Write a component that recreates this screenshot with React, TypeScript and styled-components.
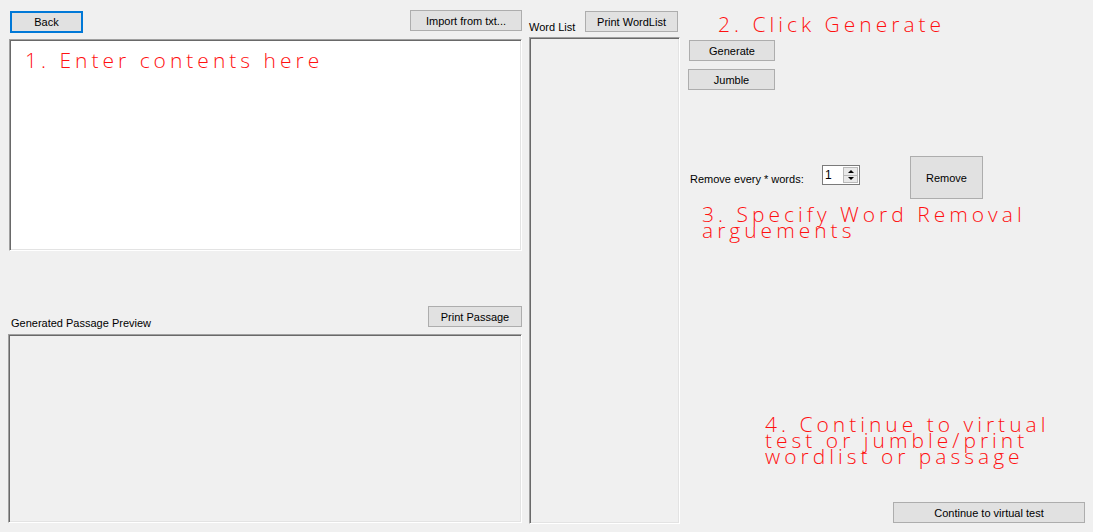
import React from 'react'
import styled, { createGlobalStyle } from 'styled-components'

const GlobalStyle = createGlobalStyle`
  html, body {
    margin: 0;
    padding: 0;
    background: #f0f0f0;
  }
  body {
    font-family: 'Liberation Sans', Arial, sans-serif;
    font-size: 11px;
    color: #000;
  }
`

const Form = styled.div`
  display: grid;
  grid-template-columns: 527px 155px 1fr;
  width: 1093px;
  height: 532px;
  overflow: hidden;
  background: #f0f0f0;
`

const Column = styled.div`
  display: flex;
  flex-direction: column;
  min-width: 0;
`

// windows style push button
const Button = styled.button<{ $w: number; $h?: number }>`
  box-sizing: border-box;
  flex-shrink: 0;
  width: ${p => p.$w}px;
  height: ${p => p.$h ?? 21}px;
  padding: 0;
  background: #e1e1e1;
  border: 1px solid #adadad;
  font-family: 'Liberation Sans', Arial, sans-serif;
  font-size: 11px;
  color: #000;
`

const BackButton = styled(Button)`
  height: 22px;
  margin: 1px 0 0 10px;
  border: 2px solid #0078d7;
`

const RightButton = styled(Button)<{ $top?: number }>`
  margin-left: auto;
  margin-top: ${p => p.$top ?? 0}px;
`

const ActionButton = styled(Button)<{ $left: number }>`
  margin: 8px 0 0 ${p => p.$left}px;
`

const RemoveButton = styled(Button)`
  margin-left: 50px;
`

const ContinueButton = styled(Button)`
  margin: auto 0 9px 211px;
`

const Label = styled.span<{ $top: number }>`
  display: block;
  margin-top: ${p => p.$top}px;
  font-size: 11px;
  line-height: 13px;
  white-space: nowrap;
`

const TopBar = styled.div`
  display: flex;
  align-items: flex-start;
  box-sizing: border-box;
  height: 39px;
  padding: 10px 5px 0 0;
`

const PassageHeader = styled.div`
  display: flex;
  align-items: flex-start;
  box-sizing: border-box;
  height: 28px;
  margin-top: 55px;
  padding: 0 5px 0 11px;
`

const WordListHeader = styled.div`
  display: flex;
  align-items: flex-start;
  box-sizing: border-box;
  height: 37px;
  padding: 0 4px 0 2px;
`

const Sunken = styled.div<{ $w: number; $h: number; $left: number; $white?: boolean }>`
  box-sizing: border-box;
  width: ${p => p.$w}px;
  height: ${p => p.$h}px;
  margin-left: ${p => p.$left}px;
  background: ${p => (p.$white ? '#fff' : '#f0f0f0')};
  border-top: 1px solid #a0a0a0;
  border-left: 1px solid #a0a0a0;
  border-right: 1px solid #fff;
  border-bottom: 1px solid #fff;
  box-shadow: inset 1px 1px 0 #696969, inset -1px -1px 0 #e3e3e3;
`

// red instruction labels
const Hint = styled.div<{ $top?: number; $left?: number }>`
  margin-top: ${p => p.$top ?? 0}px;
  margin-left: ${p => p.$left ?? 0}px;
  font-family: 'Open Sans', 'Noto Sans', sans-serif;
  font-weight: 300;
  font-size: 21px;
  line-height: 16px;
  letter-spacing: 4px;
  color: #ff1010;
  white-space: nowrap;
`

const EditorText = styled(Hint)`
  padding: 12px 0 0 15px;
`

const RemoveRow = styled.div`
  display: flex;
  align-items: flex-start;
  margin-top: 66px;
  padding-left: 8px;
`

const RemoveLabel = styled(Label)`
  width: 132px;
`

const Spinner = styled.div`
  box-sizing: border-box;
  display: flex;
  flex-shrink: 0;
  width: 38px;
  height: 20px;
  margin-top: 9px;
  border: 1px solid #7a7a7a;
  background: #fff;
`

const SpinValue = styled.span`
  flex: 1;
  padding: 2px 0 0 2px;
  font-size: 12px;
`

const SpinButtons = styled.div`
  display: flex;
  flex-direction: column;
  width: 15px;
  margin: 1px 1px 1px 0;
`

const SpinHalf = styled.div`
  flex: 1;
  box-sizing: border-box;
  display: flex;
  align-items: center;
  justify-content: center;
  background: #e9e9e9;
  border: 1px solid #b9b9b9;

  & + & {
    border-top: none;
  }
`

const Arrow = styled.span<{ $up?: boolean }>`
  width: 0;
  height: 0;
  border-left: 3px solid transparent;
  border-right: 3px solid transparent;
  ${p =>
    p.$up ? 'border-bottom: 3px solid #000;' : 'border-top: 3px solid #000;'}
`

export default function App() {
  return (
    <>
      <GlobalStyle />
      <Form>
        <Column>
          <TopBar>
            <BackButton $w={73}>Back</BackButton>
            <RightButton $w={112}>Import from txt...</RightButton>
          </TopBar>
          <Sunken $w={513} $h={212} $left={9} $white>
            <EditorText>1. Enter contents here</EditorText>
          </Sunken>
          <PassageHeader>
            <Label $top={11}>Generated Passage Preview</Label>
            <RightButton $w={94}>Print Passage</RightButton>
          </PassageHeader>
          <Sunken $w={514} $h={189} $left={8} />
        </Column>

        <Column>
          <WordListHeader>
            <Label $top={21}>Word List</Label>
            <RightButton $w={93} $top={11}>
              Print WordList
            </RightButton>
          </WordListHeader>
          <Sunken $w={151} $h={487} $left={2} />
        </Column>

        <Column>
          <Hint $top={16} $left={36}>
            2. Click Generate
          </Hint>
          <ActionButton $w={86} $left={7}>
            Generate
          </ActionButton>
          <ActionButton $w={87} $left={6}>
            Jumble
          </ActionButton>
          <RemoveRow>
            <RemoveLabel $top={17}>Remove every * words:</RemoveLabel>
            <Spinner>
              <SpinValue>1</SpinValue>
              <SpinButtons>
                <SpinHalf>
                  <Arrow $up />
                </SpinHalf>
                <SpinHalf>
                  <Arrow />
                </SpinHalf>
              </SpinButtons>
            </Spinner>
            <RemoveButton $w={73} $h={43}>
              Remove
            </RemoveButton>
          </RemoveRow>
          <Hint $top={7} $left={20}>
            3. Specify Word Removal
            <br />
            arguements
          </Hint>
          <Hint $top={178} $left={83}>
            4. Continue to virtual
            <br />
            test or jumble/print
            <br />
            wordlist or passage
          </Hint>
          <ContinueButton $w={192}>Continue to virtual test</ContinueButton>
        </Column>
      </Form>
    </>
  )
}
